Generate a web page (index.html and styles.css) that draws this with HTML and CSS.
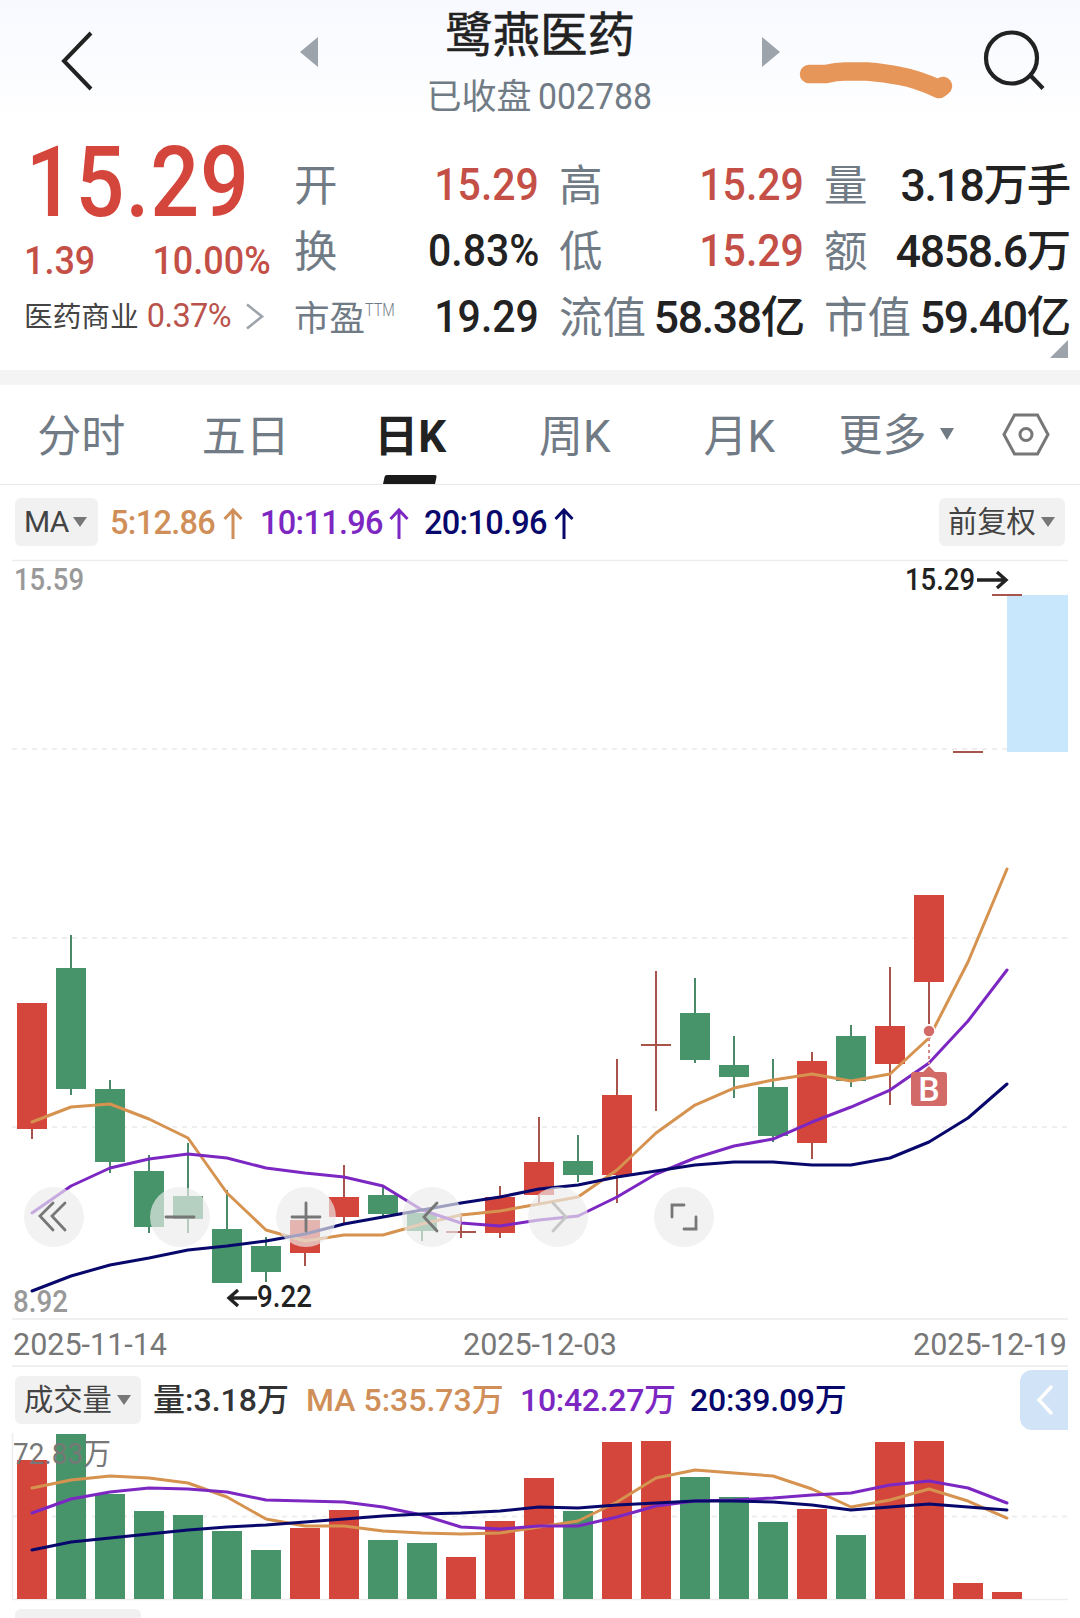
FILE: index.html
```html
<!DOCTYPE html>
<html lang="zh-CN">

<head>
    <meta charset="UTF-8" />
    <meta name="viewport" content="width=device-width, initial-scale=1.0" />
    <title>鹭燕医药 002788</title>
    <link rel="stylesheet" href="styles.css">
</head>

<body>
    <header class="header">
        <div class="header-left">
            <svg class="icon-back" width="34" height="60" viewBox="0 0 34 60">
                <path d="M31 2 L4 30 L31 58" />
            </svg>
            <svg class="icon-arrow" width="18" height="30" viewBox="0 0 18 30">
                <path d="M18 0 V30 L0 15 Z" />
            </svg>
        </div>
        <div class="header-title">
            <div class="stock-name">鹭燕医药</div>
            <div class="stock-code">已收盘 <span>002788</span></div>
        </div>
        <div class="header-right">
            <svg class="icon-arrow" width="18" height="30" viewBox="0 0 18 30">
                <path d="M0 0 V30 L18 15 Z" />
            </svg>
            <svg class="brush" width="154" height="42" viewBox="799 59 154 42">
                <path d="M809 74 H826 Q836 71.500 845 71.500 L867 71.500 Q885 73 900 76 Q917 79 939 89 L943 86" />
            </svg>
            <svg class="icon-search" width="60" height="62" viewBox="0 0 60 62">
                <circle cx="28.500" cy="29" r="25.500" />
                <path d="M47 46 L60 59.500" />
            </svg>
        </div>
    </header>

    <section class="quote">
        <div class="quote-main">
            <div class="price">15.29</div>
            <div class="change"><span>1.39</span><span>10.00%</span></div>
            <div class="sector">
                <span class="sector-name">医药商业</span>
                <span class="sector-pct">0.37%</span>
                <svg width="18" height="27" viewBox="0 0 18 27">
                    <path d="M1 1.500 L16 13.500 L1 25.500" />
                </svg>
            </div>
        </div>
        <div class="stats">
            <div class="stat"><label>开</label><b class="up">15.29</b></div>
            <div class="stat"><label>高</label><b class="up">15.29</b></div>
            <div class="stat"><label>量</label><b class="cn">3.18万手</b></div>
            <div class="stat"><label>换</label><b>0.83%</b></div>
            <div class="stat"><label>低</label><b class="up">15.29</b></div>
            <div class="stat"><label>额</label><b class="cn">4858.6万</b></div>
            <div class="stat"><label class="small">市盈<sup>TTM</sup></label><b>19.29</b></div>
            <div class="stat"><label>流值</label><b class="cn">58.38亿</b></div>
            <div class="stat"><label>市值</label><b class="cn">59.40亿</b></div>
        </div>
        <div class="corner"></div>
    </section>

    <nav class="tabs">
        <div class="tab">分时</div>
        <div class="tab">五日</div>
        <div class="tab active">日K</div>
        <div class="tab">周K</div>
        <div class="tab">月K</div>
        <div class="tab more">更多<i class="caret"></i></div>
        <svg class="icon-setting" width="48" height="43" viewBox="0 0 48 43">
            <path d="M12.500 2 H35.500 L46 21.500 L35.500 41 H12.500 L2 21.500 Z" />
            <circle cx="24" cy="21.500" r="6" />
        </svg>
    </nav>

    <div class="indicator">
        <div class="pill ma-pill">MA<i class="caret"></i></div>
        <div class="ma ma5">5:12.86<svg width="20" height="31" viewBox="0 0 20 31"><path d="M10 2 V31 M1.500 11 L10 2 L18.500 11" /></svg></div>
        <div class="ma ma10">10:11.96<svg width="20" height="31" viewBox="0 0 20 31"><path d="M10 2 V31 M1.500 11 L10 2 L18.500 11" /></svg></div>
        <div class="ma ma20">20:10.96<svg width="20" height="31" viewBox="0 0 20 31"><path d="M10 2 V31 M1.500 11 L10 2 L18.500 11" /></svg></div>
        <div class="pill right-pill">前复权<i class="caret"></i></div>
    </div>

    <div class="kchart">
        <svg id="kline" width="1080" height="758" viewBox="0 560 1080 758"></svg>
        <div class="tools">
            <button><svg viewBox="-30 -30 60 60"><path d="M-1 -14 L-14 -1 L-1 13 M11 -14 L-2 -1 L11 13" /></svg></button>
            <button><svg viewBox="-30 -30 60 60"><path d="M-14 0 H14" /></svg></button>
            <button><svg viewBox="-30 -30 60 60"><path d="M-14 0 H14 M0 -14 V14" /></svg></button>
            <button><svg viewBox="-30 -30 60 60"><path d="M5 -14 L-8 0 L5 14" /></svg></button>
            <button class="disabled"><svg viewBox="-30 -30 60 60"><path d="M-5 -14 L8 0 L-5 14" /></svg></button>
            <button><svg viewBox="-30 -30 60 60"><path d="M-12 0 V-12 H0 M12 0 V12 H0" /></svg></button>
        </div>
    </div>

    <div class="dates"><span>2025-11-14</span><span>2025-12-03</span><span>2025-12-19</span></div>

    <div class="indicator volume">
        <div class="pill vol-pill">成交量<i class="caret"></i></div>
        <div class="vol vol-now">量:3.18万</div>
        <div class="vol ma5">MA 5:35.73万</div>
        <div class="vol ma10">10:42.27万</div>
        <div class="vol ma20">20:39.09万</div>
        <div class="drawer"><svg width="18" height="32" viewBox="0 0 18 32"><path d="M16 2 L3 16 L16 30" /></svg></div>
    </div>

    <svg id="volume" width="1080" height="168" viewBox="0 1432 1080 168"></svg>
    <div class="next-pill"></div>

    <script>
        const RED = '#d4453c', GREEN = '#47946a';
        const ORANGE = '#d6924f', PURPLE = '#7c27c2', NAVY = '#08086c';
        const step = 39, first = 32;

        // [color, high, bodyTop, bodyBottom, low]
        const candles = [
            ['r', 1003, 1003, 1129, 1139], ['g', 935, 968, 1089, 1095], ['g', 1080, 1089, 1162, 1173],
            ['g', 1155, 1171, 1227, 1233], ['g', 1143, 1196, 1219, 1233], ['g', 1190, 1229, 1283, 1283],
            ['g', 1237, 1246, 1272, 1282], ['r', 1220, 1220, 1253, 1266], ['r', 1165, 1197, 1217, 1225],
            ['g', 1187, 1195, 1214, 1217], ['g', 1213, 1213, 1231, 1241], ['r', 1213, 1231, 1233, 1238],
            ['r', 1186, 1197, 1233, 1238], ['r', 1117, 1162, 1195, 1203], ['g', 1135, 1161, 1175, 1182],
            ['r', 1059, 1095, 1175, 1203], ['r', 971, 1044, 1046, 1111], ['g', 978, 1013, 1060, 1063],
            ['g', 1036, 1065, 1077, 1098], ['g', 1059, 1087, 1136, 1142], ['r', 1052, 1061, 1143, 1159],
            ['g', 1025, 1036, 1081, 1087], ['r', 967, 1026, 1064, 1105], ['r', 895, 895, 982, 1024],
            ['r', 751, 751, 753, 753], ['r', 594, 594, 596, 596]
        ];
        const ma5 = [1122, 1107, 1104, 1119, 1138, 1193, 1230, 1241, 1235, 1235, 1224, 1215, 1211, 1204, 1197, 1170, 1133, 1105, 1088, 1080, 1074, 1081, 1074, 1038, 962, 869];
        const ma10 = [1213, 1186, 1168, 1159, 1154, 1158, 1168, 1173, 1177, 1186, 1210, 1223, 1226, 1220, 1216, 1197, 1174, 1158, 1146, 1139, 1122, 1107, 1090, 1063, 1021, 970];
        const ma20 = [1291, 1276, 1265, 1258, 1250, 1246, 1241, 1234, 1224, 1217, 1210, 1203, 1197, 1189, 1185, 1177, 1171, 1165, 1162, 1162, 1165, 1165, 1158, 1142, 1118, 1084];

        const volTops = [1460, 1434, 1494, 1511, 1515, 1531, 1550, 1528, 1510, 1540, 1543, 1557, 1521, 1478, 1511, 1442, 1441, 1477, 1497, 1522, 1509, 1535, 1442, 1441, 1583, 1592];
        const vol5 = [1488, 1480, 1476, 1478, 1483, 1497, 1519, 1526, 1526, 1531, 1533, 1534, 1533, 1527, 1521, 1502, 1478, 1470, 1473, 1476, 1489, 1507, 1500, 1489, 1501, 1518];
        const vol10 = [1513, 1499, 1492, 1488, 1489, 1492, 1500, 1501, 1502, 1507, 1515, 1527, 1529, 1526, 1526, 1517, 1506, 1501, 1500, 1498, 1495, 1493, 1485, 1481, 1488, 1503];
        const vol20 = [1550, 1542, 1538, 1534, 1530, 1527, 1525, 1522, 1519, 1516, 1514, 1513, 1511, 1507, 1508, 1505, 1503, 1501, 1501, 1502, 1505, 1510, 1507, 1504, 1507, 1510];

        const x = i => first + step * i;
        const rect = (l, t, w, h, c) => `<rect x="${l}" y="${t}" width="${w}" height="${h}" fill="${c}"/>`;
        const grid = y => `<path class="grid" d="M12 ${y} H1068"/>`;
        const solid = y => `<path class="solid" d="M12 ${y} H1068"/>`;
        const line = (ys, c) => `<polyline class="line" stroke="${c}" points="${ys.map((y, i) => x(i) + ',' + y).join(' ')}"/>`;
        const text = (s, l, y, w, cls) => `<text class="${cls}" x="${l}" y="${y}" textLength="${w}" lengthAdjust="spacingAndGlyphs">${s}</text>`;

        function drawKline() {
            let out = solid(560.5) + [749, 938, 1127].map(grid).join('') + rect(1007, 595, 61, 157, '#c9e7fc');
            candles.forEach(([c, high, top, bottom, low], i) => {
                const color = c === 'r' ? RED : GREEN;
                const thin = c === 'r' ? '#a9534d' : '#4b8a69';
                out += rect(x(i) - 1, high, 2, low - high, thin);
                out += rect(x(i) - 15, top, 30, bottom - top, bottom - top < 3 ? thin : color);
            });
            out += line(ma5, ORANGE) + line(ma10, PURPLE) + line(ma20, NAVY);
            out += text('15.59', 14, 590, 70, 'axis') + text('8.92', 13, 1312, 55, 'axis');
            out += text('15.29', 905, 590, 70, 'mark') + '<path class="arrow" d="M977 580 H1006 M997 572 L1006 580 L997 588"/>';
            out += text('9.22', 257, 1307, 55, 'mark') + '<path class="arrow" d="M257 1298 H229 M238 1290 L229 1298 L238 1306"/>';
            // buy point
            out += '<path class="buy-dash" d="M929 1038 V1064"/><circle class="buy-dot" cx="929" cy="1031" r="6"/>';
            out += '<path class="buy-box" d="M914 1072 H923 L929 1066 L935 1072 H944 Q947 1072 947 1075 V1103 Q947 1106 944 1106 H914 Q911 1106 911 1103 V1075 Q911 1072 914 1072 Z"/>';
            out += '<text class="buy-text" x="929" y="1100.500">B</text>';
            document.getElementById('kline').innerHTML = out;
        }

        function drawVolume() {
            let out = '<path class="solid" d="M12.500 1433 V1600"/>' + grid(1516.5) + solid(1599.5);
            volTops.forEach((top, i) => {
                out += rect(x(i) - 15, top, 30, 1599 - top, candles[i][0] === 'r' ? RED : GREEN);
            });
            out += text('72.83万', 13, 1464, 98, 'vol-max');
            out += line(vol5, ORANGE) + line(vol10, PURPLE) + line(vol20, NAVY);
            document.getElementById('volume').innerHTML = out;
        }

        drawKline();
        drawVolume();
    </script>
</body>

</html>
```
FILE: styles.css
```css
* {
    box-sizing: border-box;
}

body {
    margin: 0;
    width: 1080px;
    height: 1618px;
    overflow: hidden;
    background: #fff;
    color: #222;
    font-family: Roboto, "Noto Sans CJK SC", sans-serif;
}

svg {
    display: block;
    fill: none;
    flex-shrink: 0;
    overflow: visible;
}

/* Header */
.header {
    height: 130px;
    display: grid;
    grid-template-columns: 318px 444px 318px;
    background: linear-gradient(#f7f9ff, #fff 125px);
}

.header-left {
    display: flex;
    justify-content: space-between;
    align-items: flex-start;
    padding: 31px 0 0 60px;
}

.header-right {
    display: flex;
    align-items: flex-start;
    padding-top: 29px;
}

.icon-back {
    stroke: #222;
    stroke-width: 4;
}

.icon-arrow {
    fill: #9da3ab;
    margin-top: 6px;
}

.header-right .icon-arrow {
    margin-top: 8px;
}

.brush {
    margin: 30px 0 0 19px;
    stroke: #e69658;
    stroke-width: 18.5;
    stroke-linecap: round;
    stroke-linejoin: round;
}

.icon-search {
    margin-left: 30px;
    stroke: #222;
    stroke-width: 4.2;
}

.header-title {
    text-align: center;
}

.stock-name {
    font-size: 47.5px;
    line-height: 72px;
    -webkit-text-stroke: .5px #222;
}

.stock-code {
    font-size: 35px;
    line-height: 51px;
    color: #717b85;
}

.stock-code span {
    display: inline-block;
    font-size: 36px;
    margin: 0 -6px 0 -2px;
    transform: scaleX(.94);
    transform-origin: left;
}

/* Quote */
.quote {
    height: 240px;
    display: flex;
    position: relative;
}

.quote-main {
    width: 294px;
    padding-left: 24px;
}

.price {
    height: 106px;
    line-height: 104px;
    font-size: 99px;
    font-weight: 500;
    letter-spacing: 1px;
    color: #d4453c;
    transform: scaleX(.87);
    transform-origin: left;
    padding-left: 2px;
}

.change {
    display: flex;
    justify-content: space-between;
    width: 271px;
    margin-top: 4px;
    line-height: 42px;
    font-size: 39.5px;
    font-weight: 500;
    color: #c44f47;
    transform: scaleX(.91);
    transform-origin: left;
}

.sector {
    display: flex;
    align-items: center;
    height: 40px;
    margin-top: 14px;
    font-size: 28.7px;
    color: #444;
}

.sector-name {
    margin-top: -3px;
}

.sector-pct {
    margin-left: 8px;
    font-size: 32.5px;
    letter-spacing: -.6px;
    color: #b9524b;
}

.sector svg {
    margin-left: 15px;
    stroke: #9da3ab;
    stroke-width: 2.6;
}

.stats {
    display: grid;
    grid-template-columns: 245px 245px 246px;
    grid-auto-rows: 66px;
    column-gap: 20px;
    padding-top: 22px;
}

.stat {
    display: flex;
    justify-content: space-between;
    align-items: center;
    line-height: 66px;
    white-space: nowrap;
}

.stat label {
    font-size: 43.5px;
    color: #717b85;
    padding-top: 3px;
}

.stat label.small {
    font-size: 35.5px;
}

.stat sup {
    display: inline-block;
    font-size: 18.5px;
    font-weight: 300;
    line-height: 0;
    vertical-align: 15px;
    margin-left: 0;
    transform: scaleX(.78);
    transform-origin: left;
}

.stat b {
    font-size: 45px;
    font-weight: 500;
    transform: scaleX(.91);
    transform-origin: right;
}

.stat b.cn {
    font-size: 44.5px;
    letter-spacing: -1.3px;
    padding-top: 2px;
    transform: none;
}

.stat b.up {
    color: #c44f47;
}

.corner {
    position: absolute;
    right: 12px;
    bottom: 12px;
    border-left: 18px solid transparent;
    border-bottom: 18px solid #9da3ab;
}

/* Period tabs */
.tabs {
    height: 115px;
    border-top: 15px solid #f4f4f4;
    border-bottom: 1px solid #e8e8e8;
    display: flex;
    align-items: center;
}

.tab {
    width: 164.5px;
    height: 99px;
    line-height: 105px;
    font-size: 44px;
    text-align: center;
    color: #717b85;
    position: relative;
    left: -1px;
}

.tab.active {
    color: #222;
    font-weight: 700;
}

.tab.active::after {
    content: "";
    position: absolute;
    left: 56px;
    bottom: 0;
    width: 52px;
    height: 9px;
    background: #1a1a1a;
    transform: skewX(-12deg);
    border-radius: 2px 2px 0 0;
}

.tab.more {
    display: flex;
    align-items: center;
    width: 180px;
    padding: 4px 0 0 17px;
}

.caret {
    display: inline-block;
    border: 7px solid transparent;
    border-top: 10px solid #777;
    border-bottom: 0;
    margin-left: 5px;
}

.tab.more .caret {
    border-top: 12px solid #717b85;
    margin: -5px 0 0 13px;
}

.icon-setting {
    margin-left: -1px;
    stroke: #777;
    stroke-width: 3;
}

/* Indicator rows */
.indicator {
    height: 75px;
    display: flex;
    align-items: center;
    padding: 0 15px 1px;
    position: relative;
}

.pill {
    height: 48px;
    line-height: 48px;
    border-radius: 6px;
    background: #f1f1f1;
    color: #444;
    font-size: 29.3px;
    display: flex;
    align-items: center;
    padding-left: 9px;
}

.ma-pill {
    width: 83px;
    font-size: 30px;
    letter-spacing: -.8px;
}

.right-pill {
    width: 126px;
    margin-left: auto;
}

.ma {
    display: flex;
    align-items: center;
    justify-content: space-between;
    font-size: 32.5px;
    font-weight: 500;
    letter-spacing: -.7px;
    padding-top: 2px;
}

.ma svg {
    stroke: currentColor;
    stroke-width: 3;
}

.ma.ma5 {
    width: 133px;
    margin-left: 12px;
}

.ma.ma10 {
    width: 149px;
    margin-left: 17px;
}

.ma.ma20 {
    width: 150px;
    margin-left: 15px;
}

.ma5 {
    color: #d08f58;
}

.ma10 {
    color: #7c27c2;
}

.ma20 {
    color: #08086c;
}

/* K line */
.kchart {
    height: 758px;
    position: relative;
}

.grid {
    stroke: #eee;
    stroke-width: 2;
    stroke-dasharray: 5 5;
}

.solid {
    stroke: #ededed;
    stroke-width: 1.5;
}

.line {
    stroke-width: 3;
    stroke-linejoin: round;
    stroke-linecap: round;
}

text {
    font-weight: 500;
    font-size: 31px;
}

.axis {
    fill: #999;
}

.mark {
    fill: #222;
}

.arrow {
    stroke: #222;
    stroke-width: 3.4;
}

.vol-max {
    fill: #777;
    font-weight: 400;
    font-size: 30px;
}

.buy-dash {
    stroke: #d98a88;
    stroke-width: 2;
    stroke-dasharray: 3 3;
}

.buy-dot {
    fill: #d26a68;
    stroke: #fff;
    stroke-width: 1.5;
}

.buy-box {
    fill: #d26a68;
}

.buy-text {
    fill: #fff;
    font-size: 34px;
    font-weight: 500;
    text-anchor: middle;
}

.tools {
    position: absolute;
    left: 24px;
    top: 627px;
    display: flex;
    gap: 66px;
}

.tools button {
    width: 60px;
    height: 60px;
    padding: 0;
    border: none;
    border-radius: 50%;
    background: rgba(236, 236, 236, .67);
}

.tools svg {
    stroke: #777;
    stroke-width: 2.8;
    stroke-linecap: round;
}

.tools .disabled svg {
    stroke: #c6c6c6;
}

.dates {
    height: 49px;
    margin: 0 12px;
    padding: 4px 1px 0;
    border-top: 2px solid #f0f0f0;
    border-bottom: 2px solid #f0f0f0;
    display: flex;
    justify-content: space-between;
    align-items: center;
    font-size: 30.5px;
    line-height: 41px;
    color: #777;
}

/* Volume */
.volume {
    height: 65px;
    padding: 0 12px 0 15px;
}

.vol {
    font-size: 32px;
    font-weight: 500;
    white-space: nowrap;
    margin-top: -5px;
}

.vol-pill {
    width: 126px;
}

.vol-now {
    width: 153px;
    margin-left: 12px;
    color: #333;
}

.vol.ma5 {
    width: 214px;
}

.vol.ma10 {
    width: 170px;
    letter-spacing: -.3px;
}

.vol.ma20 {
    letter-spacing: -.2px;
}

.drawer {
    width: 48px;
    height: 60px;
    margin-left: auto;
    border-radius: 12px 0 0 12px;
    background: #d1e3f6;
    display: flex;
    align-items: center;
    padding-left: 16px;
}

.drawer svg {
    stroke: #fff;
    stroke-width: 3.5;
}

.next-pill {
    width: 126px;
    height: 9px;
    margin: 9px 0 0 15px;
    border-radius: 6px 6px 0 0;
    background: #f1f1f1;
}
```
